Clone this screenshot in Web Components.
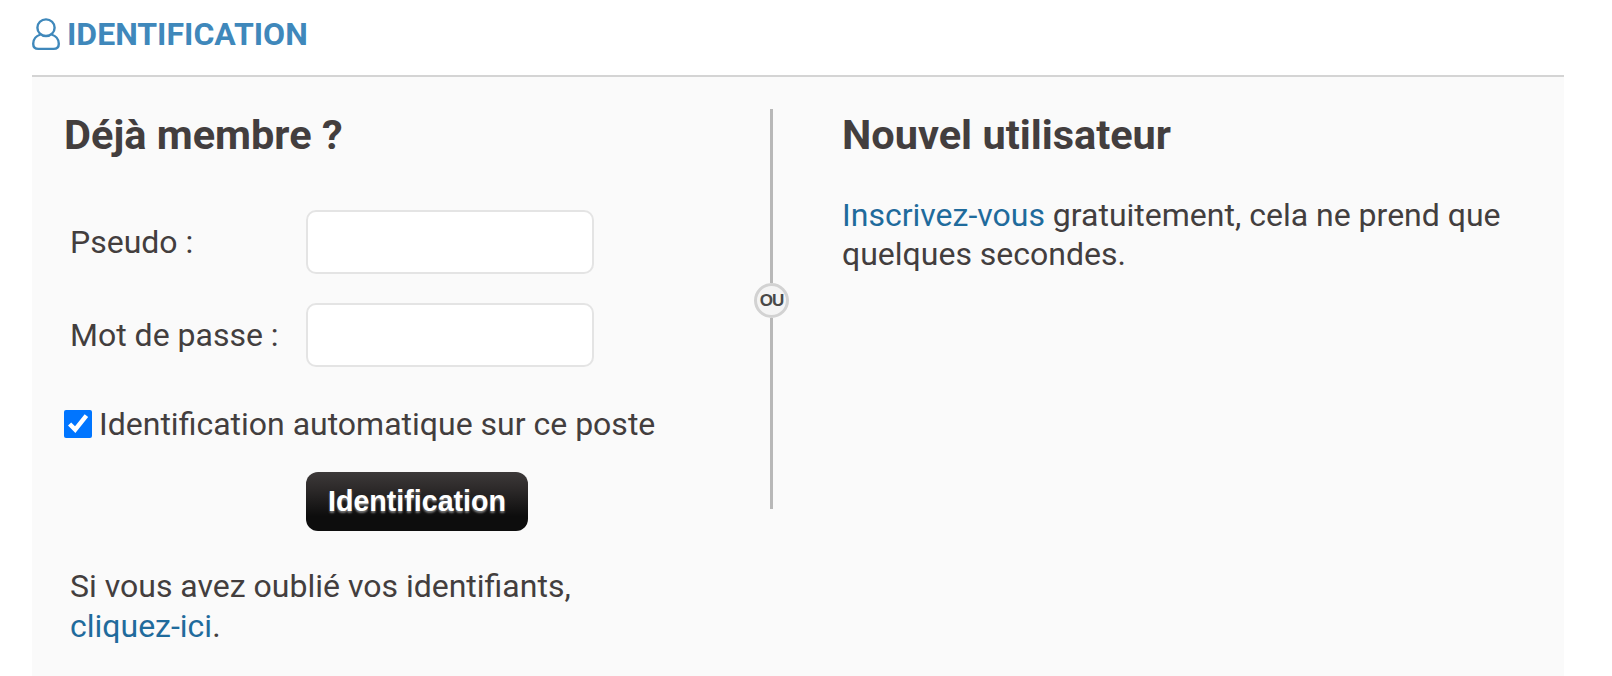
<!DOCTYPE html>
<html lang="fr">
<head>
<meta charset="utf-8">
<title>Identification</title>
<style>
    html, body { margin: 0; background: #fff; }
    body { font-family: Roboto, "Liberation Sans", sans-serif; color: #433e3e; }
    a { color: #1f6b9c; text-decoration: none; }
</style>
</head>
<body>
<login-page>
    <page-title>IDENTIFICATION</page-title>
    <login-panel>
        <member-box slot="left" heading="Déjà membre ?">
            Si vous avez oublié vos identifiants,<br><a href="#">cliquez-ici</a>.
        </member-box>
        <signup-box slot="right" heading="Nouvel utilisateur">
            <a href="#">Inscrivez-vous</a> gratuitement, cela ne prend que quelques secondes.
        </signup-box>
    </login-panel>
</login-page>

<script>
const loginPage = document.createElement('template');
loginPage.innerHTML = `
    <style>
        :host {
            display: block;
            height: 676px;
            overflow: hidden;
            padding: 0 48px 0 32px;
        }
    </style>
    <slot></slot>
`;

class LoginPage extends HTMLElement {
    constructor() {
        super();
        this.attachShadow({ mode: 'open' });
        this.shadowRoot.appendChild(loginPage.content.cloneNode(true));
    };
};

const pageTitle = document.createElement('template');
pageTitle.innerHTML = `
    <style>
        :host {
            display: flex;
            align-items: center;
            gap: 7px;
            height: 77px;
            box-sizing: border-box;
            padding-bottom: 7px;
            border-bottom: 2px solid #d4d4d4;
            color: #3f88bb;
            font-size: 32px;
            font-weight: 700;
        }
        svg { display: block; margin-top: -1px; }
    </style>
    <svg width="28" height="32" viewBox="0 0 28 33" preserveAspectRatio="none" fill="none" stroke="#3f88bb" stroke-width="2.4">
        <circle cx="14" cy="10" r="8.6"/>
        <path d="M8.5 17C4 18.5 1.2 22 1.2 26.5C1.2 30 3 31.8 6.5 31.8H21.5C25 31.8 26.8 30 26.8 26.5C26.8 22 24 18.5 19.5 17"/>
    </svg>
    <span><slot></slot></span>
`;

class PageTitle extends HTMLElement {
    constructor() {
        super();
        this.attachShadow({ mode: 'open' });
        this.shadowRoot.appendChild(pageTitle.content.cloneNode(true));
    };
};

const loginPanel = document.createElement('template');
loginPanel.innerHTML = `
    <style>
        :host {
            display: grid;
            grid-template-columns: 722px 35px 1fr;
            background: #fafafa;
            padding-top: 32px;
            height: 600px;
            box-sizing: border-box;
        }
        .left { padding-left: 32px; }
        .right { padding-left: 53px; padding-right: 48px; }
        or-divider { align-self: start; }
    </style>
    <div class="left"><slot name="left"></slot></div>
    <or-divider></or-divider>
    <div class="right"><slot name="right"></slot></div>
`;

class LoginPanel extends HTMLElement {
    constructor() {
        super();
        this.attachShadow({ mode: 'open' });
        this.shadowRoot.appendChild(loginPanel.content.cloneNode(true));
    };
};

const orDivider = document.createElement('template');
orDivider.innerHTML = `
    <style>
        :host {
            display: flex;
            flex-direction: column;
            align-items: center;
            height: 400px;
        }
        .line { flex: 1; width: 3px; background: #b8b8b8; }
        .line.top { flex: 0 0 174px; }
        .circle {
            width: 35px;
            height: 35px;
            box-sizing: border-box;
            border: 3px solid #d2d2d2;
            border-radius: 50%;
            background: #f4f4f4;
            display: flex;
            align-items: center;
            justify-content: center;
            color: #484848;
            font: 700 17px "Liberation Sans", sans-serif;
            letter-spacing: -1px;
        }
    </style>
    <div class="line top"></div>
    <div class="circle">OU</div>
    <div class="line"></div>
`;

class OrDivider extends HTMLElement {
    constructor() {
        super();
        this.attachShadow({ mode: 'open' });
        this.shadowRoot.appendChild(orDivider.content.cloneNode(true));
    };
};

const memberBox = document.createElement('template');
memberBox.innerHTML = `
    <style>
        :host { display: block; font-size: 32px; line-height: 40px; }
        h2 {
            margin: 0;
            font-size: 41.5px;
            line-height: 52px;
            font-weight: 700;
        }
        form { display: flex; flex-direction: column; }
        .field {
            display: grid;
            grid-template-columns: 236px 288px;
            align-items: center;
            margin-left: 6px;
            margin-top: 29px;
        }
        .field:first-child { margin-top: 49px; }
        .field input {
            height: 64px;
            box-sizing: border-box;
            border: 2px solid #e4e4e4;
            border-radius: 10px;
            background: #fff;
            outline: none;
        }
        .auto {
            display: flex;
            align-items: center;
            gap: 7px;
            margin-top: 37px;
            white-space: nowrap;
        }
        .auto input {
            width: 28px;
            height: 28px;
            margin: 0;
        }
        .submit { margin: 28px 0 0 242px; }
        button {
            display: block;
            width: 222px;
            height: 59px;
            padding: 0;
            border: 0;
            border-radius: 12px;
            background: linear-gradient(#3d3939, #2c2929 30%, #0d0d0d 75%);
            color: #fff;
            font: 700 28.6px "Liberation Sans", sans-serif;
            text-shadow: 0 2px 2px #777;
        }
        .forgot { margin: 35px 0 0 6px; line-height: 40px; }
    </style>
    <h2></h2>
    <form action="javascript:void(0);">
        <label class="field">Pseudo :<input type="text" name="pseudo"></label>
        <label class="field">Mot de passe :<input type="password" name="password"></label>
        <label class="auto"><input type="checkbox" name="auto" checked>Identification automatique sur ce poste</label>
        <div class="submit"><button type="submit">Identification</button></div>
    </form>
    <div class="forgot"><slot></slot></div>
`;

class MemberBox extends HTMLElement {
    constructor() {
        super();
        this.attachShadow({ mode: 'open' });
        this.shadowRoot.appendChild(memberBox.content.cloneNode(true));
        this.shadowRoot.querySelector('h2').textContent = this.getAttribute('heading');
    };
};

const signupBox = document.createElement('template');
signupBox.innerHTML = `
    <style>
        :host { display: block; font-size: 32px; line-height: 39px; }
        h2 {
            margin: 0;
            font-size: 41.5px;
            line-height: 52px;
            font-weight: 700;
        }
        p { margin: 35px 0 0; max-width: 660px; }
    </style>
    <h2></h2>
    <p><slot></slot></p>
`;

class SignupBox extends HTMLElement {
    constructor() {
        super();
        this.attachShadow({ mode: 'open' });
        this.shadowRoot.appendChild(signupBox.content.cloneNode(true));
        this.shadowRoot.querySelector('h2').textContent = this.getAttribute('heading');
    };
};

window.customElements.define('login-page', LoginPage);
window.customElements.define('page-title', PageTitle);
window.customElements.define('or-divider', OrDivider);
window.customElements.define('login-panel', LoginPanel);
window.customElements.define('member-box', MemberBox);
window.customElements.define('signup-box', SignupBox);
</script>
</body>
</html>
